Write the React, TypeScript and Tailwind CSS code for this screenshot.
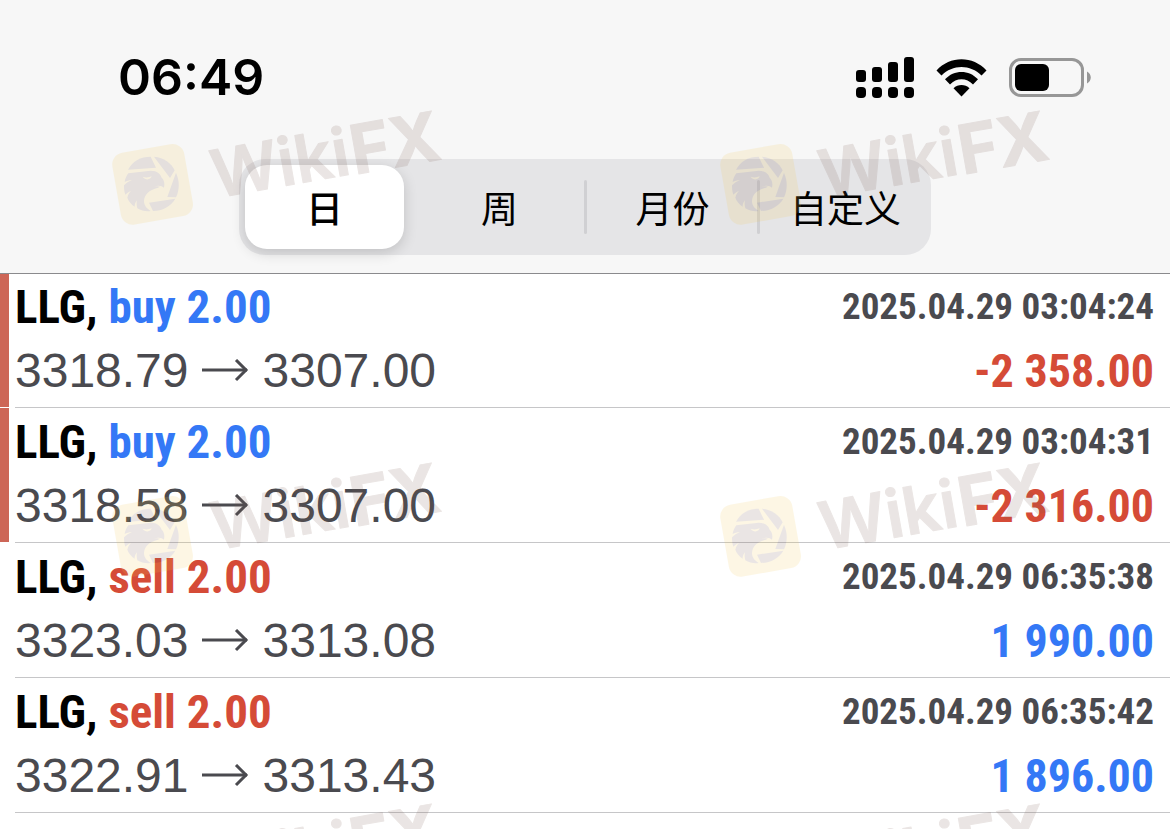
import { useState } from 'react'
import clsx from 'clsx'

interface Deal {
  id: number
  symbol: string
  side: 'buy' | 'sell'
  volume: string
  open: string
  close: string
  time: string
  profit: string
  flagged: boolean
}

const deals: Deal[] = [
  { id: 1, symbol: 'LLG', side: 'buy', volume: '2.00', open: '3318.79', close: '3307.00', time: '2025.04.29 03:04:24', profit: '-2 358.00', flagged: true },
  { id: 2, symbol: 'LLG', side: 'buy', volume: '2.00', open: '3318.58', close: '3307.00', time: '2025.04.29 03:04:31', profit: '-2 316.00', flagged: true },
  { id: 3, symbol: 'LLG', side: 'sell', volume: '2.00', open: '3323.03', close: '3313.08', time: '2025.04.29 06:35:38', profit: '1 990.00', flagged: false },
  { id: 4, symbol: 'LLG', side: 'sell', volume: '2.00', open: '3322.91', close: '3313.43', time: '2025.04.29 06:35:42', profit: '1 896.00', flagged: false },
]

const periods = ['日', '周', '月份', '自定义']

// Centres of the logo tile of each watermark
const watermarks = [
  { x: 152, y: 184 },
  { x: 760, y: 184 },
  { x: 152, y: 536 },
  { x: 760, y: 536 },
  { x: 152, y: 877 },
  { x: 760, y: 877 },
]

function SignalIcon() {
  return (
    <svg width="58" height="41" viewBox="0 0 58 41" aria-label="Signal">
      <rect x="0" y="13" width="10" height="12" rx="3" />
      <rect x="16" y="10" width="10" height="15" rx="3" />
      <rect x="32" y="5" width="10" height="20" rx="3" />
      <rect x="48" y="0" width="10" height="25" rx="3" />
      <rect x="0" y="30" width="10" height="11" rx="4" />
      <rect x="16" y="30" width="10" height="11" rx="4" />
      <rect x="32" y="30" width="10" height="11" rx="4" />
      <rect x="48" y="30" width="10" height="11" rx="4" />
    </svg>
  )
}

function WifiIcon() {
  return (
    <svg width="51" height="38" viewBox="0 0 51 38" aria-label="Wi-Fi">
      <path d="M0.5 11.5C14-3.5 37-3.5 50.5 11.5L45.5 16.5C34.5 5 16.5 5 5.5 16.5Z" />
      <path d="M9 20.3C18 10.5 33 10.5 42 20.3L37 25.5C30.5 18.5 20.5 18.5 14 25.5Z" />
      <path d="M17.5 29.3C22 24.9 29 24.9 33.5 29.3L25.5 37.5Z" />
    </svg>
  )
}

function BatteryIcon() {
  return (
    <svg width="82" height="39" viewBox="0 0 82 39" aria-label="Battery">
      <rect x="1.5" y="1.5" width="72" height="36" rx="10.5" fill="none" stroke="#979797" strokeWidth="3" />
      <rect x="6" y="6" width="34" height="27" rx="6" />
      <path d="M78 13.5C83 16 83 23 78 25.5Z" fill="#979797" />
    </svg>
  )
}

function Arrow() {
  return (
    <svg width="48" height="24" viewBox="0 0 48 24" fill="none" stroke="currentColor" strokeWidth="3" aria-label="to">
      <path d="M0 11H45" />
      <path d="M34 1L44 11L34 21" />
    </svg>
  )
}

function Watermark({ x, y }: { x: number; y: number }) {
  return (
    <g transform={`translate(${x} ${y})`} opacity="0.15">
      <g transform="rotate(-10)">
        <rect x="-36" y="-36" width="73" height="73" rx="12" fill="#f3c94f" />
        <g fill="#7b5a50" stroke="#7b5a50" strokeLinejoin="round" fontFamily="Inter, sans-serif">
          <text x="60" y="25" fontSize="66" fontWeight="600" strokeWidth="1">Wiki</text>
          <text x="201" y="26" fontSize="68" fontWeight="700" strokeWidth="1">FX</text>
        </g>
      </g>
      <g transform="scale(0.3333) translate(-142 -139)" fill="#7b5a50">
        <path d="M70 96C84 70 108 57 138 57L154 90Z" />
        <path d="M148 57C178 60 200 76 210 98L196 121Z" />
        <path d="M214 105C225 130 225 155 214 179L188 178Z" />
        <path d="M133 195L212 183C198 206 173 220 145 220Z" />
        <path d="M71 107L138 99C158 99 168 110 171 120C178 126 181 138 178 150C172 144 162 142 148 146C165 146 170 147 160 150C132 157 119 171 118 190C118 204 127 213 138 220C124 222 110 219 98 212C96 204 95 196 97 188C90 196 90 203 90 207C80 201 72 191 68 180C70 171 74 165 79 160C71 163 66 167 62 171C58 160 58 151 58 143C66 135 74 130 82 128C73 128 66 130 60 133C61 123 66 114 71 107Z" />
        <path d="M114 117C122 120 132 120 141 116C138 127 122 129 114 117Z" fill="#f3c94f" />
      </g>
    </g>
  )
}

function DealRow({ deal }: { deal: Deal }) {
  const loss = deal.profit.startsWith('-')

  return (
    <li className="flex gap-[6px]">
      <span className={clsx('mb-px w-[9px] shrink-0', deal.flagged && 'bg-[#cd6657]')} />
      <div className="flex-1 border-b border-[#c6c6c8] pt-[2px] pr-4 pb-1 text-[#4a4a4f]">
        <div className="flex h-16 items-center justify-between font-['Roboto_Condensed','Roboto',sans-serif] font-bold">
          <span className="text-[47px] text-black">
            {deal.symbol},{' '}
            <span className={deal.side === 'buy' ? 'text-[#3478f6]' : 'text-[#d54b37]'}>
              {deal.side} {deal.volume}
            </span>
          </span>
          <time className="text-[37px]">{deal.time}</time>
        </div>
        <div className="flex h-16 items-center justify-between">
          <span className="flex items-center gap-[13px] font-['Liberation_Sans',sans-serif] text-[48px]">
            {deal.open}
            <Arrow />
            {deal.close}
          </span>
          <span
            className={clsx(
              "font-['Roboto_Condensed','Roboto',sans-serif] text-[46px] font-bold",
              loss ? 'text-[#d54b37]' : 'text-[#3478f6]'
            )}
          >
            {deal.profit}
          </span>
        </div>
      </div>
    </li>
  )
}

export default function App() {
  const [period, setPeriod] = useState('日')

  return (
    <div className="relative h-screen overflow-hidden bg-white">
      {/* Header */}
      <header className="relative bg-[#f7f7f7] pt-[57px] pb-[18px] shadow-[0_1px_0_#8a8a8d]">
        <div className="flex h-[41px] items-center justify-between pr-[79px] pl-[118px]">
          <span className="font-['Inter',sans-serif] text-[50px] font-semibold">06:49</span>
          <div className="flex items-center gap-[22px]">
            <SignalIcon />
            <WifiIcon />
            <BatteryIcon />
          </div>
        </div>

        <div className="mx-auto mt-[61px] grid h-[96px] w-full max-w-[692px] grid-cols-4 rounded-[26px] bg-[#e5e5e7]">
          {periods.map((label, index) => (
            <div
              key={label}
              className={clsx('relative flex py-[6px]', index === 0 ? 'pr-2 pl-[6px]' : 'pr-[6px] pl-2')}
            >
              {index > 1 && (
                <span className="absolute top-[21px] -left-px h-[54px] w-[3px] rounded-full bg-[#d0d0d3]" />
              )}
              <button
                type="button"
                onClick={() => setPeriod(label)}
                className={clsx(
                  "flex-1 rounded-[22px] font-['Noto_Sans_CJK_SC',sans-serif] text-[37px] leading-[84px] whitespace-nowrap",
                  period === label && 'bg-white font-medium shadow-[0_4px_14px_rgba(0,0,0,0.16)]'
                )}
              >
                {label}
              </button>
            </div>
          ))}
        </div>
      </header>

      {/* Deals */}
      <ul>
        {deals.map((deal) => (
          <DealRow key={deal.id} deal={deal} />
        ))}
      </ul>

      {/* Watermarks */}
      <svg className="pointer-events-none absolute inset-0 h-full w-full" aria-hidden="true">
        {watermarks.map((mark) => (
          <Watermark key={`${mark.x}-${mark.y}`} x={mark.x} y={mark.y} />
        ))}
      </svg>
    </div>
  )
}
